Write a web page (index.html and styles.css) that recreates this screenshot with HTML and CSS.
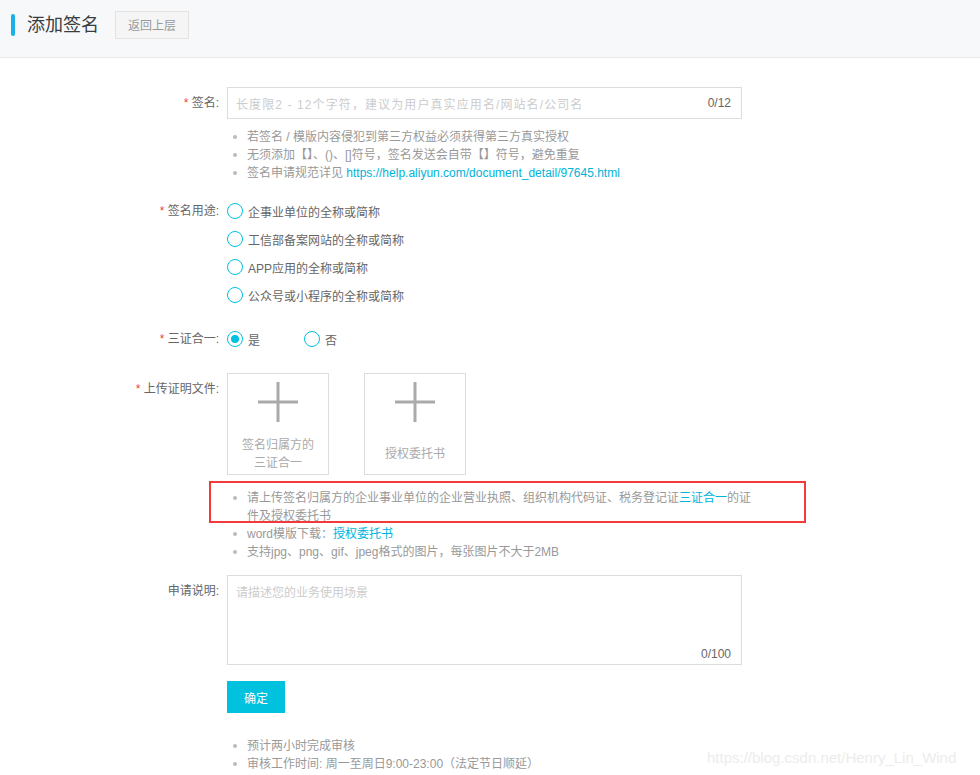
FILE: index.html
```html
<!DOCTYPE html>
<html lang="zh-CN">
<head>
<meta charset="utf-8">
<title>添加签名</title>
<link rel="stylesheet" href="styles.css">
</head>
<body>
<header class="header">
  <span class="header-bar"></span>
  <h1 class="header-title">添加签名</h1>
  <button class="back-btn">返回上层</button>
</header>

<main class="form">
  <div class="row row-sign">
    <label class="row-label"><span class="req">*</span> 签名:</label>
    <div class="row-body">
      <div class="text-input">
        <span class="placeholder placeholder-wide">长度限2 - 12个字符，建议为用户真实应用名/网站名/公司名</span>
        <span class="counter">0/12</span>
      </div>
      <ul class="hints hints-sign">
        <li>若签名 / 模版内容侵犯到第三方权益必须获得第三方真实授权</li>
        <li>无须添加【】、()、[]符号，签名发送会自带【】符号，避免重复</li>
        <li>签名申请规范详见 <a class="link">https://help.aliyun.com/document_detail/97645.html</a></li>
      </ul>
    </div>
  </div>

  <div class="row row-purpose">
    <label class="row-label label-radio"><span class="req">*</span> 签名用途:</label>
    <div class="row-body radio-list">
      <div class="radio"><span class="radio-dot"></span>企事业单位的全称或简称</div>
      <div class="radio"><span class="radio-dot"></span>工信部备案网站的全称或简称</div>
      <div class="radio"><span class="radio-dot"></span>APP应用的全称或简称</div>
      <div class="radio"><span class="radio-dot"></span>公众号或小程序的全称或简称</div>
    </div>
  </div>

  <div class="row row-three">
    <label class="row-label label-radio"><span class="req">*</span> 三证合一:</label>
    <div class="row-body radio-inline">
      <div class="radio radio-wide"><span class="radio-dot is-checked"></span>是</div>
      <div class="radio"><span class="radio-dot"></span>否</div>
    </div>
  </div>

  <div class="row row-upload">
    <label class="row-label label-upload"><span class="req">*</span> 上传证明文件:</label>
    <div class="row-body">
      <div class="uploads">
        <div class="upload-box">
          <svg class="plus" viewBox="0 0 40 40" width="40" height="40"><path d="M0 20H40M20 0V40" stroke="#aaaaaa" stroke-width="3" fill="none"/></svg>
          <div class="upload-text">签名归属方的<br>三证合一</div>
        </div>
        <div class="upload-box">
          <svg class="plus" viewBox="0 0 40 40" width="40" height="40"><path d="M0 20H40M20 0V40" stroke="#aaaaaa" stroke-width="3" fill="none"/></svg>
          <div class="upload-text">授权委托书</div>
        </div>
      </div>
      <ul class="hints hints-upload">
        <li>请上传签名归属方的企业事业单位的企业营业执照、组织机构代码证、税务登记证<a class="link">三证合一</a>的证件及授权委托书</li>
        <li>word模版下载：<a class="link">授权委托书</a></li>
        <li>支持jpg、png、gif、jpeg格式的图片，每张图片不大于2MB</li>
      </ul>
    </div>
  </div>

  <div class="row row-desc">
    <label class="row-label label-desc">申请说明:</label>
    <div class="row-body">
      <div class="textarea">
        <span class="placeholder">请描述您的业务使用场景</span>
        <span class="counter counter-area">0/100</span>
      </div>
      <button class="submit-btn">确定</button>
      <ul class="hints hints-bottom">
        <li>预计两小时完成审核</li>
        <li>审核工作时间: 周一至周日9:00-23:00（法定节日顺延）</li>
      </ul>
    </div>
  </div>
</main>

<div class="annotation"></div>
<div class="watermark">https://blog.csdn.net/Henry_Lin_Wind</div>
</body>
</html>
```

FILE: styles.css
```css
* { box-sizing: border-box; }

html, body {
  margin: 0;
  padding: 0;
  background: #ffffff;
  font-family: "Liberation Sans", "Noto Sans CJK SC", sans-serif;
  font-size: 12px;
  color: #666666;
  height: 775px;
  overflow: hidden;
}

body { position: relative; }

.header {
  height: 58px;
  background: #f7f8fa;
  border-bottom: 1px solid #e6e8eb;
  display: flex;
  align-items: center;
  padding-left: 11px;
  padding-bottom: 8px;
}

.header-bar {
  width: 4px;
  height: 22px;
  border-radius: 2px;
  background: #1bb0e6;
  margin-right: 12px;
}

.header-title {
  margin: 0;
  font-size: 18px;
  font-weight: normal;
  color: #373d41;
  line-height: 22px;
}

.back-btn {
  margin-left: 16px;
  height: 28px;
  width: 74px;
  padding: 0;
  background: #f5f5f5;
  border: 1px solid #e3e3e3;
  color: #999999;
  font-family: inherit;
  font-size: 12px;
}

.form {
  padding-top: 29px;
}

.row {
  display: flex;
  align-items: flex-start;
}

.row-label {
  width: 227px;
  flex: none;
  text-align: right;
  padding-right: 8px;
  line-height: 32px;
  color: #666666;
  white-space: nowrap;
}

.req {
  color: #e8492f;
}

.row-body {
  flex: none;
}

.text-input {
  width: 515px;
  height: 32px;
  border: 1px solid #dddddd;
  display: flex;
  align-items: center;
  justify-content: space-between;
  padding: 0 10px 0 8px;
}

.placeholder {
  color: #cccccc;
}

.placeholder-wide {
  letter-spacing: 1.1px;
}

.counter {
  color: #666666;
}

.hints {
  list-style: none;
  margin: 0;
  padding: 0;
  color: #999999;
  line-height: 18px;
}

.hints li {
  position: relative;
  padding-left: 20px;
}

.hints li::before {
  content: "";
  position: absolute;
  left: 6px;
  top: 7px;
  width: 4px;
  height: 4px;
  border-radius: 50%;
  background: #bbbbbb;
}

.link {
  color: #00b3d9;
  text-decoration: none;
}

.hints-sign {
  margin-top: 9px;
}

.row-purpose {
  margin-top: 15px;
}

.label-radio {
  line-height: 28px;
}

.radio {
  display: flex;
  align-items: center;
  height: 28px;
  color: #666666;
}

.radio-dot {
  width: 16px;
  height: 16px;
  border: 1.5px solid #00c1de;
  border-radius: 50%;
  margin-left: 0;
  margin-right: 5px;
  display: flex;
  align-items: center;
  justify-content: center;
}

.radio-dot.is-checked::after {
  content: "";
  width: 8px;
  height: 8px;
  border-radius: 50%;
  background: #00c1de;
}

.row-three {
  margin-top: 16px;
}

.radio-inline {
  display: flex;
}

.radio-wide {
  width: 77px;
}

.row-upload {
  margin-top: 20px;
}

.label-upload {
  line-height: 32px;
}

.uploads {
  display: flex;
  gap: 35px;
}

.upload-box {
  width: 102px;
  height: 102px;
  border: 1px solid #dddddd;
  display: flex;
  flex-direction: column;
  align-items: center;
}

.plus {
  margin-top: 8px;
  display: block;
}

.upload-text {
  margin-top: 12px;
  height: 40px;
  display: flex;
  align-items: center;
  text-align: center;
  color: #aaaaaa;
  line-height: 18px;
}

.hints-upload {
  margin-top: 14px;
  width: 530px;
}

.row-desc {
  margin-top: 14px;
}

.label-desc {
  line-height: 32px;
}

.textarea {
  position: relative;
  width: 515px;
  height: 90px;
  border: 1px solid #dddddd;
  padding: 8px 8px;
  line-height: 18px;
}

.counter-area {
  position: absolute;
  right: 10px;
  bottom: 1px;
}

.submit-btn {
  display: block;
  margin-top: 16px;
  width: 58px;
  height: 32px;
  border: none;
  background: #00c1de;
  color: #ffffff;
  font-family: inherit;
  font-size: 12px;
  padding: 0;
}

.hints-bottom {
  margin-top: 24px;
}

.annotation {
  position: absolute;
  left: 209px;
  top: 481px;
  width: 597px;
  height: 42px;
  border: 2px solid #f23a3a;
  pointer-events: none;
}

.watermark {
  position: absolute;
  left: 707px;
  top: 748px;
  font-size: 15px;
  line-height: 20px;
  color: #ececec;
  white-space: nowrap;
}
```
